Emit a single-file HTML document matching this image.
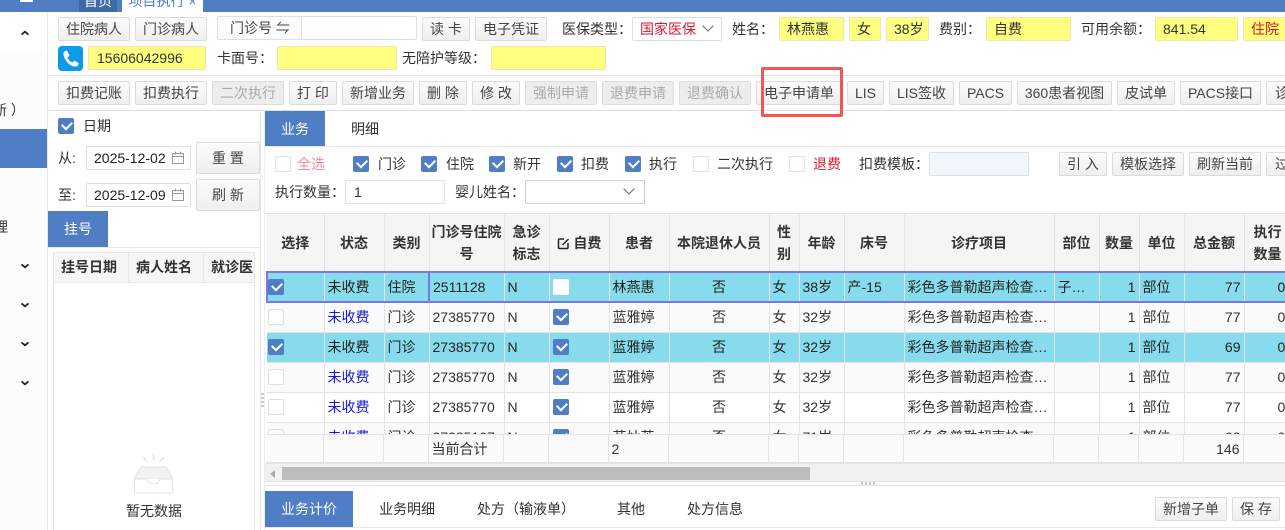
<!DOCTYPE html>
<html lang="zh"><head><meta charset="utf-8"><title>项目执行</title>
<style>
*{box-sizing:border-box}
html,body{margin:0;padding:0;width:1285px;height:530px;overflow:hidden;background:#fff}
body{position:relative;font:14px/20px "Liberation Sans","Noto Sans CJK SC",sans-serif;color:#333}
.a{position:absolute;white-space:nowrap}
.b{position:absolute;height:24px;line-height:22px;text-align:center;border:1px solid #dcdcdc;border-radius:2px;background:linear-gradient(#fbfbfb,#efefef);color:#444;white-space:nowrap}
.d{background:#ededed;color:#aaa;border-color:#ddd}
.y{position:absolute;height:24px;line-height:23px;background:#ffff80;border:1px solid #e8e8b0;border-radius:2px;padding-left:7px;color:#333;white-space:nowrap}
.i{position:absolute;height:24px;line-height:22px;background:#fff;border:1px solid #dcdfe6;border-radius:2px;white-space:nowrap}
.c{position:absolute;width:16px;height:16px;border-radius:2px;background:#fff;border:1px solid #dcdfe6}
.k{background:#4f7ec4;border-color:#4f7ec4}
.k:after{content:"";position:absolute;left:3px;top:2px;width:8px;height:5px;border-left:2px solid #fff;border-bottom:2px solid #fff;transform:rotate(-45deg)}
.tab{position:absolute;background:#4f7ec4;color:#fff;text-align:center;height:36px;line-height:36px}
.chev{position:absolute;left:22px;width:6px;height:6px;border-right:2px solid #223;border-bottom:2px solid #223;transform:scaleY(.8) rotate(45deg)}
.dv{position:absolute;width:8px;height:8px;border-right:1px solid #666;border-bottom:1px solid #666;transform:rotate(45deg)}
#g{position:absolute;left:266px;top:214px;width:1019px;height:220px;overflow:hidden}
#f{position:absolute;left:266px;top:434px;width:1019px;height:29px;overflow:hidden}
table{border-collapse:collapse;table-layout:fixed;width:1038px}
td,th{border-right:1px solid #e4e4e4;border-bottom:1px solid #e4e4e4;padding:0 3px;white-space:nowrap;overflow:hidden;height:30px;font-weight:normal;position:relative}
th{height:58px;background:#f5f5f5;font-weight:bold;color:#333;text-align:center;white-space:normal;line-height:22px;padding:0 2px}
#f td{height:28px}
.s td{background:#86dcec;color:#222}
.alt td{background:#fafafa}
.cur td{border-top:2px solid #7b78e0;border-bottom:2px solid #7b78e0;background:#86dcec;color:#222}
.r{text-align:right}.m{text-align:center}
td .c{left:3px;top:6px}
td:first-child .c{left:1px}
.cur td:first-child .c{left:0}
.bl{color:#1a1ad0}
</style></head><body>

<div class="a" style="left:0;top:0;width:1285px;height:12px;background:#4f7ec4"></div>
<div class="a" style="left:20px;top:0;width:13px;height:2px;background:#fff"></div>
<div class="a" style="left:79px;top:0;width:38px;height:12px;background:#3f6aa6;color:#fff;overflow:hidden;text-align:center;line-height:3px">首页</div>
<div class="a" style="left:122px;top:0;width:81px;height:12px;background:#fff;color:#4f7ec4;overflow:hidden;text-align:center;line-height:3px">项目执行 ×</div>

<div class="a" style="left:0;top:12px;width:48px;height:518px;background:#fff;border-right:1px solid #e8e8e8"></div>
<div class="a" style="left:0;top:51px;width:47px;height:479px;background:#fcfcfc"></div>
<div class="chev" style="top:31px;transform:scaleY(.8) rotate(225deg)"></div>
<div class="a" style="left:-7px;top:100px">新 ）</div>
<div class="a" style="left:0;top:129px;width:47px;height:39px;background:#4f7ec4"></div>
<div class="a" style="left:-6px;top:217px">理</div>
<div class="chev" style="top:262px"></div>
<div class="chev" style="top:301px"></div>
<div class="chev" style="top:340px"></div>
<div class="chev" style="top:379px"></div>

<div class="b" style="left:58px;top:17px;width:72px">住院病人</div>
<div class="b" style="left:135px;top:17px;width:72px">门诊病人</div>
<div class="i" style="left:217px;top:16px;width:200px;padding-left:12px;background:linear-gradient(90deg,#fbfbfb 83px,#dcdfe6 83px,#dcdfe6 84px,#fff 84px);color:#444">门诊号 ⇋</div>
<div class="b" style="left:422px;top:17px;width:48px">读 卡</div>
<div class="b" style="left:475px;top:17px;width:72px">电子凭证</div>
<div class="a" style="left:562px;top:19px">医保类型：</div>
<div class="i" style="left:632px;top:17px;width:90px;padding-left:7px;color:#d8192c">国家医保</div>
<div class="dv" style="left:704px;top:22px"></div>
<div class="a" style="left:732px;top:19px">姓名：</div>
<div class="y" style="left:779px;top:17px;width:65px">林燕惠</div>
<div class="y" style="left:849px;top:17px;width:32px">女</div>
<div class="y" style="left:886px;top:17px;width:43px;padding-left:7px">38岁</div>
<div class="a" style="left:939px;top:19px">费别：</div>
<div class="y" style="left:986px;top:17px;width:85px">自费</div>
<div class="a" style="left:1081px;top:19px">可用余额：</div>
<div class="y" style="left:1155px;top:17px;width:83px">841.54</div>
<div class="y" style="left:1243px;top:17px;width:60px;color:#e01010">住院</div>

<div class="a" style="left:58px;top:46px;width:25px;height:25px;border-radius:4px;background:#0d9be8"></div>
<svg class="a" style="left:58px;top:46px" width="25" height="25" viewBox="0 0 25 25"><path d="M6 5.5 L9 4.5 L11.5 9.5 L9.5 11.5 C10.5 14 12 15.5 14.5 16.5 L16.5 14.5 L21 17.5 L19.5 20 C17 21.5 12.5 20 9.5 16.5 C6.5 13 4.5 8.5 6 5.5Z" fill="#fff"/></svg>
<div class="y" style="left:88px;top:46px;width:118px;padding-left:8px">15606042996</div>
<div class="a" style="left:217px;top:48px">卡面号：</div>
<div class="y" style="left:277px;top:46px;width:120px"></div>
<div class="a" style="left:402px;top:48px">无陪护等级：</div>
<div class="y" style="left:491px;top:46px;width:115px"></div>
<div class="a" style="left:48px;top:75px;width:1237px;height:1px;background:#e2e2e2"></div>

<div class="b" style="left:58px;top:81px;width:72px">扣费记账</div>
<div class="b" style="left:135px;top:81px;width:72px">扣费执行</div>
<div class="b d" style="left:212px;top:81px;width:72px">二次执行</div>
<div class="b" style="left:289px;top:81px;width:48px">打 印</div>
<div class="b" style="left:342px;top:81px;width:72px">新增业务</div>
<div class="b" style="left:419px;top:81px;width:48px">删 除</div>
<div class="b" style="left:472px;top:81px;width:48px">修 改</div>
<div class="b d" style="left:525px;top:81px;width:72px">强制申请</div>
<div class="b d" style="left:602px;top:81px;width:72px">退费申请</div>
<div class="b d" style="left:679px;top:81px;width:72px">退费确认</div>
<div class="b" style="left:756px;top:81px;width:86px">电子申请单</div>
<div class="b" style="left:847px;top:81px;width:37px">LIS</div>
<div class="b" style="left:889px;top:81px;width:65px">LIS签收</div>
<div class="b" style="left:959px;top:81px;width:53px">PACS</div>
<div class="b" style="left:1017px;top:81px;width:95px">360患者视图</div>
<div class="b" style="left:1117px;top:81px;width:58px">皮试单</div>
<div class="b" style="left:1180px;top:81px;width:81px">PACS接口</div>
<div class="b" style="left:1266px;top:81px;width:40px;text-align:left;padding-left:8px">诊疗</div>
<div class="a" style="left:48px;top:110px;width:1237px;height:1px;background:#e2e2e2"></div>
<div class="a" style="left:761px;top:67px;width:82px;height:50px;border:3px solid #f55454;border-radius:2px"></div>

<div class="c k" style="left:58px;top:118px"></div>
<div class="a" style="left:83px;top:116px">日期</div>
<div class="a" style="left:58px;top:148px">从:</div>
<div class="i" style="left:86px;top:146px;width:105px;padding-left:7px;color:#222">2025-12-02</div>
<div class="a" style="left:58px;top:185px">至:</div>
<div class="i" style="left:86px;top:183px;width:105px;padding-left:7px;color:#222">2025-12-09</div>
<svg class="a" style="left:171px;top:151px" width="14" height="14" fill="none" stroke="#999"><path d="M1.5 2.5h11v10h-11zM1.5 5.5h11M4.5 .5v3M9.5 .5v3"/></svg>
<svg class="a" style="left:171px;top:188px" width="14" height="14" fill="none" stroke="#999"><path d="M1.5 2.5h11v10h-11zM1.5 5.5h11M4.5 .5v3M9.5 .5v3"/></svg>
<div class="b" style="left:196px;top:142px;width:64px;height:32px;line-height:30px">重 置</div>
<div class="b" style="left:196px;top:179px;width:64px;height:32px;line-height:30px">刷 新</div>
<div class="tab" style="left:48px;top:211px;width:60px">挂号</div>
<div class="a" style="left:48px;top:247px;width:212px;height:1px;background:#e8e8e8"></div>
<div class="a" style="left:260px;top:111px;width:1px;height:419px;background:#e8e8e8"></div>
<div class="a" style="left:264px;top:111px;width:1px;height:419px;background:#eee"></div>
<div class="a" style="left:261px;top:393px;width:3px;height:14px;background:repeating-linear-gradient(#ccc 0 2px,#fff 2px 4px)"></div>
<div class="a" style="left:53px;top:252px;width:202px;height:278px;border:1px solid #e8e8e8;border-bottom:0;overflow:hidden">
<div style="height:30px;background:#f6f6f6;border-bottom:1px solid #e8e8e8;font-weight:bold;white-space:nowrap;line-height:28px;color:#333"><span style="position:absolute;left:7px">挂号日期</span><span style="position:absolute;left:82px">病人姓名</span><span style="position:absolute;left:157px">就诊医</span><i style="position:absolute;left:74px;top:0;width:1px;height:30px;background:#e8e8e8"></i><i style="position:absolute;left:149px;top:0;width:1px;height:30px;background:#e8e8e8"></i></div>
</div>
<svg class="a" style="left:133px;top:453px" width="42" height="42" fill="none"><path d="M20.500 1v6M10 4l4 4.500M31 4l-4 4.500" stroke="#e2e2e2" stroke-width="1.500"/><path d="M8 14h25l7 12H1z" fill="#f2f2f4"/><path d="M1.500 26v12q0 2 2 2h34q2 0 2-2V26H27q-1 5-6.500 5T14 26H1.500z" fill="#fff" stroke="#e2e2e2"/><path d="M8 14h25l7 12M8 14L1 26" stroke="#e2e2e2"/></svg>
<div class="a" style="left:126px;top:501px">暂无数据</div>

<div class="tab" style="left:265px;top:111px;width:60px">业务</div>
<div class="a" style="left:351px;top:119px">明细</div>
<div class="a" style="left:265px;top:146px;width:1020px;height:1px;background:#e8e8e8"></div>
<div class="c" style="left:275px;top:156px"></div><div class="a" style="left:297px;top:154px;color:#f08a9c">全选</div>
<div class="c k" style="left:353px;top:156px"></div><div class="a" style="left:378px;top:154px">门诊</div>
<div class="c k" style="left:421px;top:156px"></div><div class="a" style="left:446px;top:154px">住院</div>
<div class="c k" style="left:489px;top:156px"></div><div class="a" style="left:513px;top:154px">新开</div>
<div class="c k" style="left:557px;top:156px"></div><div class="a" style="left:581px;top:154px">扣费</div>
<div class="c k" style="left:625px;top:156px"></div><div class="a" style="left:649px;top:154px">执行</div>
<div class="c" style="left:693px;top:156px"></div><div class="a" style="left:717px;top:154px">二次执行</div>
<div class="c" style="left:789px;top:156px"></div><div class="a" style="left:813px;top:154px;color:#e0202c">退费</div>
<div class="a" style="left:859px;top:154px">扣费模板：</div>
<div class="i" style="left:929px;top:152px;width:100px;background:#f0f6fc"></div>
<div class="b" style="left:1059px;top:152px;width:48px">引 入</div>
<div class="b" style="left:1112px;top:152px;width:72px">模板选择</div>
<div class="b" style="left:1189px;top:152px;width:72px">刷新当前</div>
<div class="b" style="left:1266px;top:152px;width:40px;text-align:left;padding-left:8px">过滤</div>
<div class="a" style="left:275px;top:182px">执行数量：</div>
<div class="i" style="left:345px;top:180px;width:100px;padding-left:8px">1</div>
<div class="a" style="left:455px;top:182px">婴儿姓名：</div>
<div class="i" style="left:525px;top:180px;width:120px;border-color:#c8cede"></div>
<div class="dv" style="left:625px;top:185px"></div>

<div id="g"><table>
<colgroup><col style="width:57px"><col style="width:60px"><col style="width:45px"><col style="width:75px"><col style="width:45px"><col style="width:60px"><col style="width:60px"><col style="width:100px"><col style="width:30px"><col style="width:45px"><col style="width:60px"><col style="width:150px"><col style="width:45px"><col style="width:40px"><col style="width:45px"><col style="width:60px"><col style="width:65px"></colgroup>
<tr><th>选择</th><th>状态</th><th>类别</th><th>门诊号住院号</th><th>急诊标志</th><th><svg width="13" height="13" fill="none" stroke="#222" stroke-width="1.500" style="vertical-align:-2px"><path d="M7 2H2.500q-1 0-1 1v7.500q0 1 1 1H10q1 0 1-1V6M5.500 8L11.500 2"/></svg> 自费</th><th>患者</th><th>本院退休人员</th><th>性别</th><th>年龄</th><th>床号</th><th>诊疗项目</th><th>部位</th><th>数量</th><th>单位</th><th>总金额</th><th style="text-align:left;padding-left:9px">执行<br>数量</th></tr>
<tr class="cur"><td style="border-left:2px solid #7b78e0"><span class="c k"></span></td><td>未收费</td><td style="border-right:2px solid #7b78e0">住院</td><td>2511128</td><td>N</td><td><span class="c" style="border:0"></span></td><td>林燕惠</td><td class="m">否</td><td>女</td><td>38岁</td><td>产-15</td><td>彩色多普勒超声检查…</td><td>子…</td><td class="r">1</td><td>部位</td><td class="r">77</td><td class="r" style="text-align:left;padding-left:33px">0</td></tr>
<tr class="alt"><td><span class="c"></span></td><td class="bl">未收费</td><td>门诊</td><td>27385770</td><td>N</td><td><span class="c k"></span></td><td>蓝雅婷</td><td class="m">否</td><td>女</td><td>32岁</td><td></td><td>彩色多普勒超声检查…</td><td></td><td class="r">1</td><td>部位</td><td class="r">77</td><td style="padding-left:33px">0</td></tr>
<tr class="s"><td><span class="c k"></span></td><td>未收费</td><td>门诊</td><td>27385770</td><td>N</td><td><span class="c k"></span></td><td>蓝雅婷</td><td class="m">否</td><td>女</td><td>32岁</td><td></td><td>彩色多普勒超声检查…</td><td></td><td class="r">1</td><td>部位</td><td class="r">69</td><td style="padding-left:33px">0</td></tr>
<tr class="alt"><td><span class="c"></span></td><td class="bl">未收费</td><td>门诊</td><td>27385770</td><td>N</td><td><span class="c k"></span></td><td>蓝雅婷</td><td class="m">否</td><td>女</td><td>32岁</td><td></td><td>彩色多普勒超声检查…</td><td></td><td class="r">1</td><td>部位</td><td class="r">77</td><td style="padding-left:33px">0</td></tr>
<tr><td><span class="c"></span></td><td class="bl">未收费</td><td>门诊</td><td>27385770</td><td>N</td><td><span class="c k"></span></td><td>蓝雅婷</td><td class="m">否</td><td>女</td><td>32岁</td><td></td><td>彩色多普勒超声检查…</td><td></td><td class="r">1</td><td>部位</td><td class="r">77</td><td style="padding-left:33px">0</td></tr>
<tr class="alt"><td><span class="c"></span></td><td class="bl">未收费</td><td>门诊</td><td>27385107</td><td>N</td><td><span class="c k"></span></td><td>苏灿英</td><td class="m">否</td><td>女</td><td>71岁</td><td></td><td>彩色多普勒超声检查…</td><td></td><td class="r">1</td><td>部位</td><td class="r">69</td><td style="padding-left:33px">0</td></tr>
</table></div>
<div class="a" style="left:265px;top:213px;width:1020px;height:1px;background:#e4e4e4"></div>
<div id="f"><table style="border-top:1px solid #e4e4e4">
<colgroup><col style="width:57px"><col style="width:60px"><col style="width:45px"><col style="width:75px"><col style="width:45px"><col style="width:60px"><col style="width:60px"><col style="width:100px"><col style="width:30px"><col style="width:45px"><col style="width:60px"><col style="width:150px"><col style="width:45px"><col style="width:40px"><col style="width:45px"><col style="width:60px"><col style="width:65px"></colgroup>
<tr style="background:#fafafa"><td></td><td></td><td></td><td>当前合计</td><td></td><td></td><td>2</td><td></td><td></td><td></td><td></td><td></td><td></td><td></td><td></td><td class="r">146</td><td></td></tr>
</table></div>
<div class="a" style="left:265px;top:463px;width:1020px;height:19px;background:#f1f1f1;border-top:1px solid #e4e4e4;border-bottom:1px solid #e4e4e4"></div>
<div class="a" style="left:270px;top:470px;border:4px solid transparent;border-right:5px solid #aaa;border-left:0"></div>
<div class="a" style="left:282px;top:467px;width:528px;height:13px;background:#bdbdbd"></div>
<div class="a" style="left:861px;top:482px;width:14px;height:3px;background:repeating-linear-gradient(90deg,#ccc 0 2px,#fff 2px 4px)"></div>
<div class="a" style="left:265px;top:485px;width:1020px;height:1px;background:#e2e2e2"></div>
<div class="tab" style="left:265px;top:491px;width:88px">业务计价</div>
<div class="a" style="left:379px;top:499px">业务明细</div>
<div class="a" style="left:477px;top:499px">处方（输液单）</div>
<div class="a" style="left:617px;top:499px">其他</div>
<div class="a" style="left:687px;top:499px">处方信息</div>
<div class="a" style="left:265px;top:527px;width:1020px;height:1px;background:#e8e8e8"></div>
<div class="b" style="left:1155px;top:497px;width:72px">新增子单</div>
<div class="b" style="left:1232px;top:497px;width:48px">保 存</div>
</body></html>
